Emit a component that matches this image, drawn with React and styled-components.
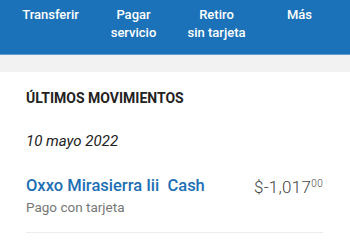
import React from 'react';
import styled, { createGlobalStyle } from 'styled-components';

const GlobalStyle = createGlobalStyle`
  body {
    margin: 0;
    background: #ffffff;
    font-family: Roboto, "Liberation Sans", sans-serif;
  }
`;

const Page = styled.div`
  width: 350px;
  min-height: 250px;
  background: #ffffff;
`;

const ActionBar = styled.nav`
  display: grid;
  grid-template-columns: repeat(4, 1fr);
  height: 55px;
  padding: 0 9px;
  box-sizing: border-box;
  background: #1b72b8;
  border-bottom: 1px solid #5f9dd0;
`;

const Action = styled.div`
  padding-top: 6px;
  text-align: center;
  color: #ffffff;
  font-size: 13px;
  font-weight: 500;
  line-height: 18px;
`;

const Strip = styled.div`
  height: 17px;
  background: #f2f2f2;
`;

const Section = styled.section`
  padding: 17px 27px 0 26px;
`;

const Title = styled.h2`
  margin: 0;
  font-size: 14px;
  font-weight: 700;
  color: #222222;
  line-height: 18px;
`;

const DateLabel = styled.div`
  margin-top: 25px;
  font-size: 15px;
  font-style: italic;
  color: #222222;
  line-height: 18px;
`;

const Movement = styled.div`
  display: flex;
  justify-content: space-between;
  align-items: flex-start;
  margin-top: 26px;
  padding-bottom: 16px;
  border-bottom: 1px solid #ececec;
`;

const Merchant = styled.div`
  color: #1c6fb5;
  font-size: 16.5px;
  font-weight: 500;
  line-height: 20px;
  white-space: pre;
`;

const Detail = styled.div`
  margin-top: 2px;
  color: #777777;
  font-size: 13.5px;
  line-height: 18px;
`;

const Amount = styled.div`
  margin-top: 1px;
  color: #444444;
  font-size: 17px;
  font-weight: 300;
  line-height: 20px;
  letter-spacing: 0.3px;

  sup {
    font-size: 10px;
    vertical-align: 6px;
    line-height: 0;
  }
`;

const actions = [['Transferir'], ['Pagar', 'servicio'], ['Retiro', 'sin tarjeta'], ['Más']];

export default function App() {
  return (
    <Page>
      <GlobalStyle />
      <ActionBar>
        {actions.map((lines) => (
          <Action key={lines[0]}>
            {lines.map((l) => (
              <div key={l}>{l}</div>
            ))}
          </Action>
        ))}
      </ActionBar>
      <Strip />
      <Section>
        <Title>ÚLTIMOS MOVIMIENTOS</Title>
        <DateLabel>10 mayo 2022</DateLabel>
        <Movement>
          <div>
            <Merchant>{'Oxxo Mirasierra Iii  Cash'}</Merchant>
            <Detail>Pago con tarjeta</Detail>
          </div>
          <Amount>
            $-1,017<sup>00</sup>
          </Amount>
        </Movement>
      </Section>
    </Page>
  );
}
